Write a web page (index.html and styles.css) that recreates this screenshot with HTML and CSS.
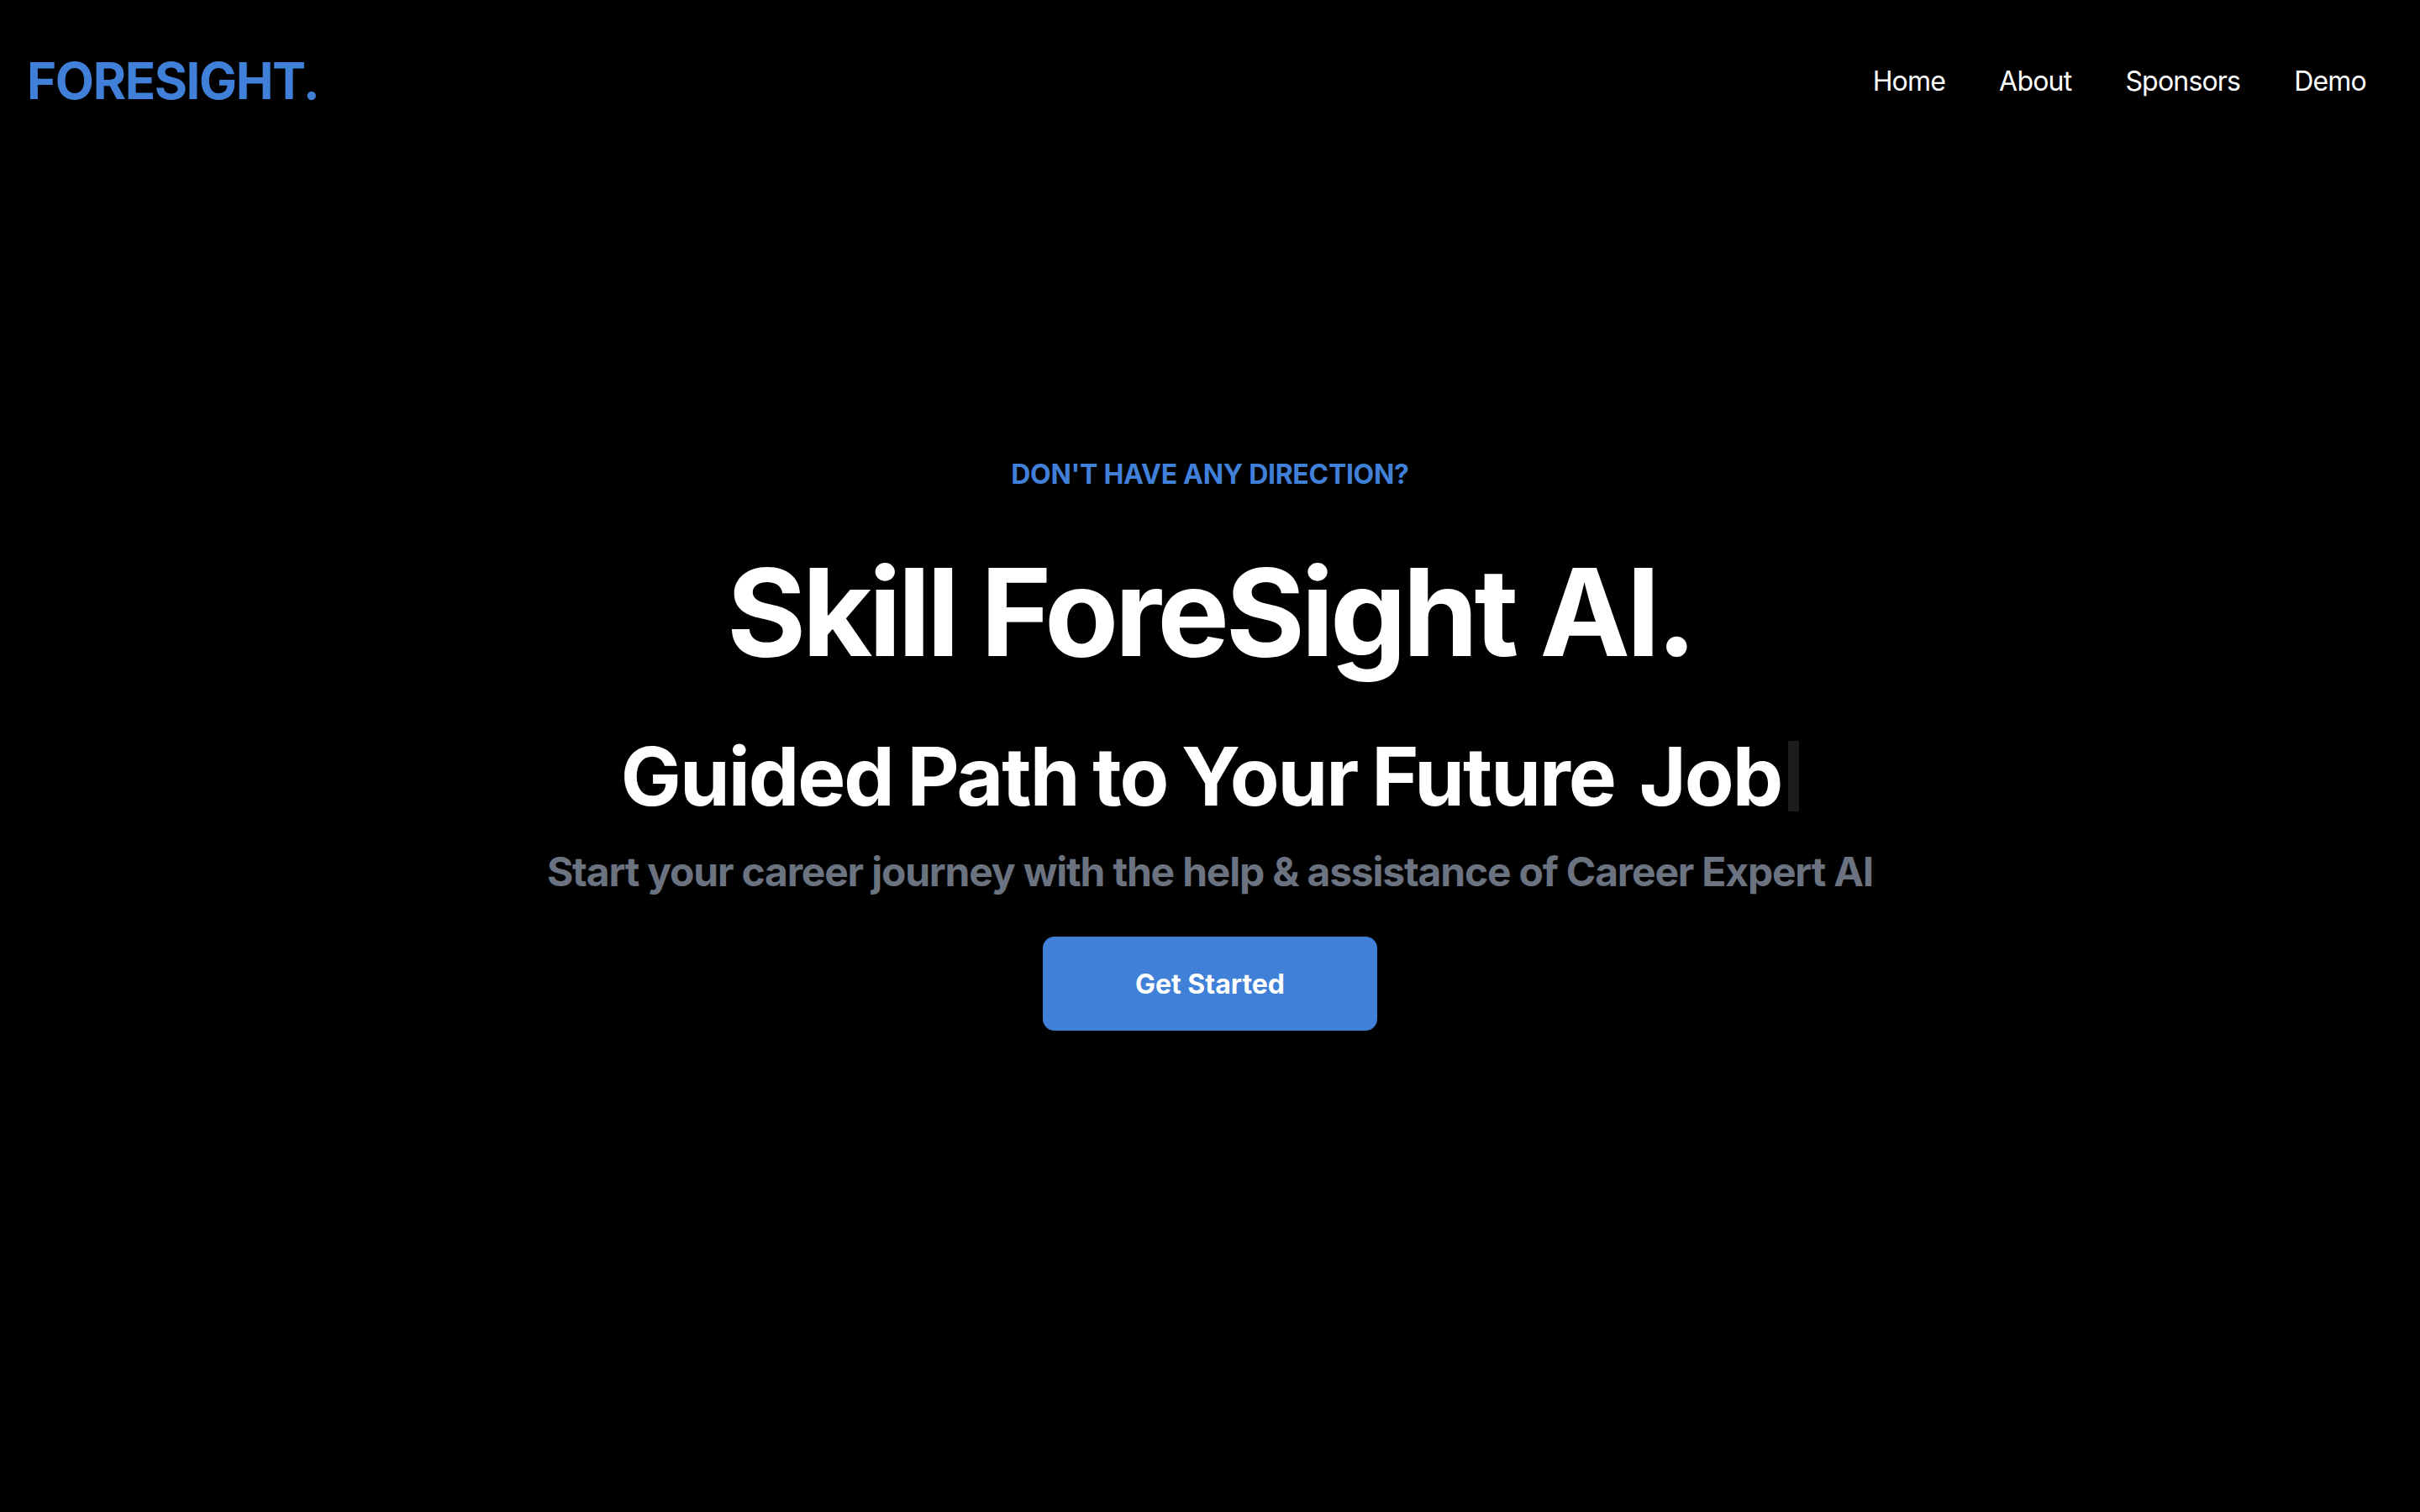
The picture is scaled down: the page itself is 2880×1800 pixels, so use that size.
FILE: index.html
```html
<!DOCTYPE html>
<html lang="en">
<head>
<meta charset="utf-8">
<title>Foresight</title>
<link rel="stylesheet" href="styles.css">
</head>
<body>
<header class="topbar">
  <a class="logo" href="#">FORESIGHT.</a>
  <nav class="nav">
    <a href="#">Home</a>
    <a href="#">About</a>
    <a href="#">Sponsors</a>
    <a href="#">Demo</a>
  </nav>
</header>
<main class="hero">
  <p class="eyebrow">DON'T HAVE ANY DIRECTION?</p>
  <h1 class="title">Skill ForeSight AI.</h1>
  <h2 class="typed">Guided Path to Your Future<span class="gap"></span> Job<span class="cursor"></span></h2>
  <p class="lead">Start your career journey with the help &amp; assistance of Career Expert AI</p>
  <a class="cta" href="#">Get Started</a>
</main>
</body>
</html>
```
FILE: styles.css
```css
html, body {
  margin: 0;
  padding: 0;
  background: #000;
  height: 100%;
}
body {
  font-family: Inter, "Noto Sans", sans-serif;
  color: #fff;
}
a { text-decoration: none; color: inherit; }

.topbar {
  display: flex;
  justify-content: space-between;
  align-items: center;
  height: 192px;
  padding: 0 64px 0 32px;
}
.logo {
  font-size: 60px;
  font-weight: 700;
  letter-spacing: -1.4px;
  color: #4080d8;
}
.nav {
  display: flex;
  gap: 64px;
}
.nav a {
  font-size: 32px;
  font-weight: 400;
  letter-spacing: -0.8px;
  color: #fff;
}

.hero {
  display: flex;
  flex-direction: column;
  align-items: center;
  text-align: center;
  padding-top: 349px;
}
.eyebrow {
  margin: 0;
  font-size: 32px;
  font-weight: 700;
  letter-spacing: -0.3px;
  color: #4080d8;
  line-height: 1.5;
}
.title {
  margin: 68px 0 0;
  font-size: 144px;
  font-weight: 700;
  line-height: 1;
  letter-spacing: -4.5px;
}
.typed {
  margin: 75px 0 0;
  font-size: 96px;
  font-weight: 700;
  line-height: 1;
  letter-spacing: -2px;
  word-spacing: -4px;
  display: flex;
  align-items: center;
  white-space: pre;
}
.gap {
  display: inline-block;
  width: 12px;
}
.cursor {
  display: inline-block;
  width: 13px;
  height: 84px;
  margin-left: 8px;
  background: #1c1c1c;
}
.lead {
  margin: 32px 0 0;
  font-size: 48px;
  font-weight: 700;
  letter-spacing: -1.2px;
  color: #6b7280;
  line-height: 1.4;
}
.cta {
  margin-top: 44px;
  display: inline-flex;
  align-items: center;
  justify-content: center;
  width: 398px;
  height: 112px;
  border-radius: 14px;
  background: #4080d8;
  font-size: 32px;
  font-weight: 700;
  color: #fff;
}
```
